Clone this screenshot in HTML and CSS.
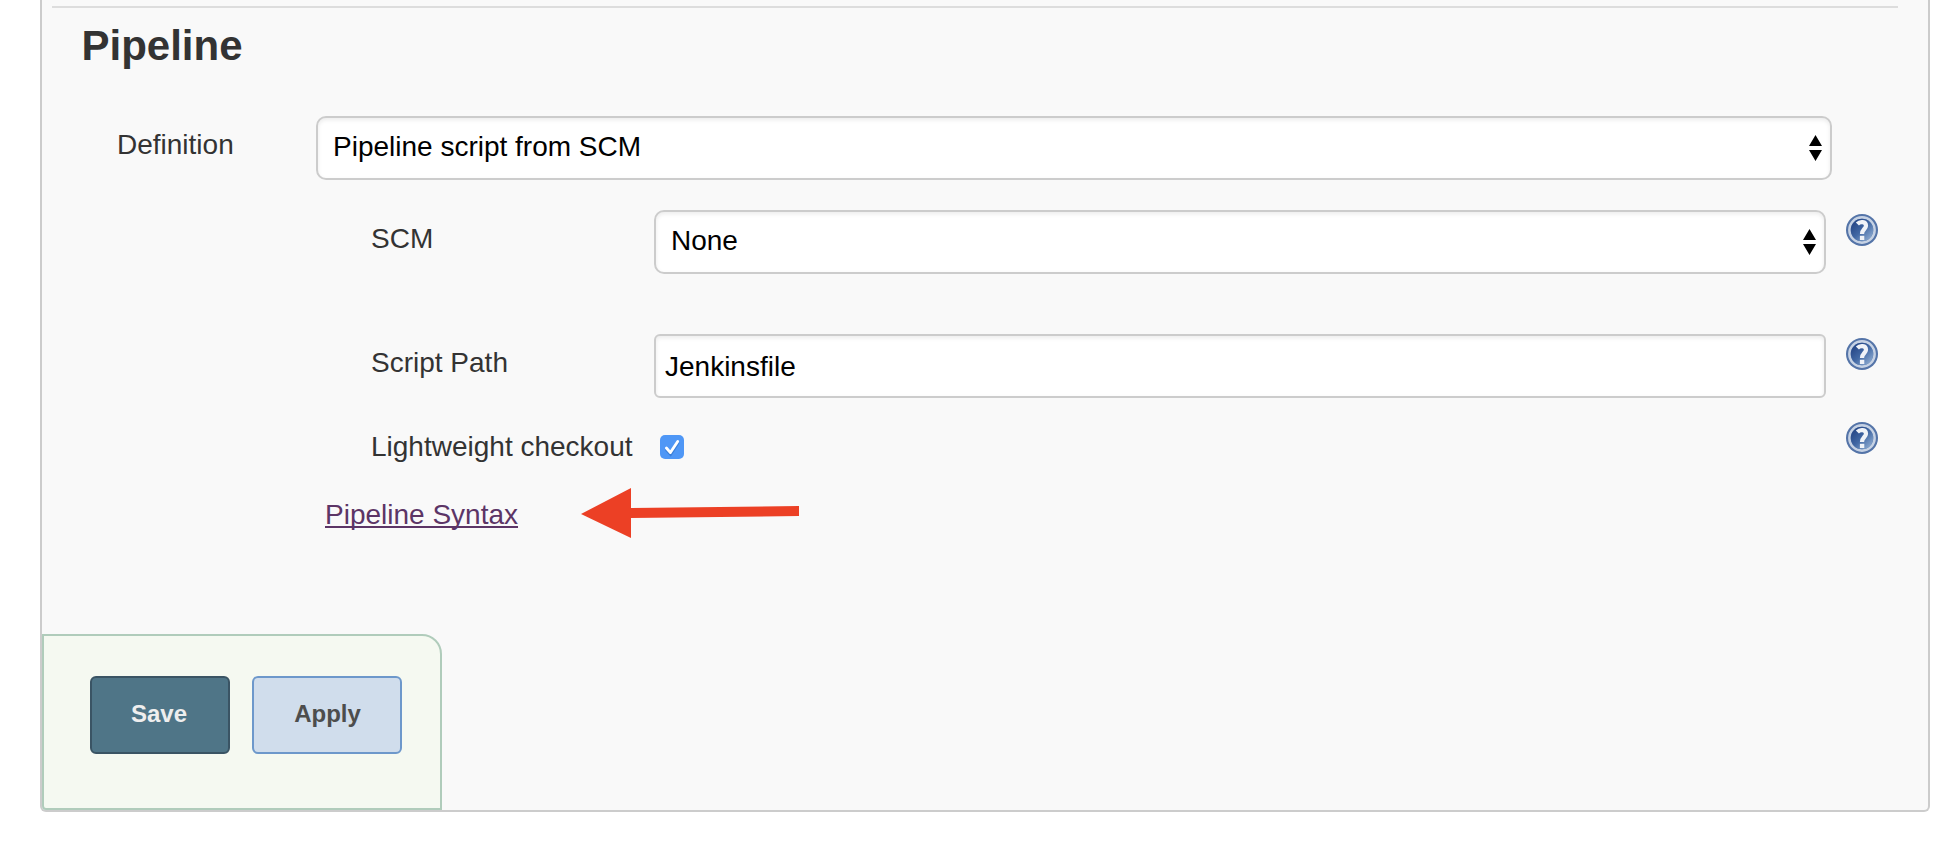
FILE: index.html
```html
<!DOCTYPE html>
<html lang="en">
<head>
<meta charset="utf-8">
<title>Pipeline configuration</title>
<link rel="stylesheet" href="styles.css">
</head>
<body>
<svg class="defs" aria-hidden="true">
  <defs>
    <linearGradient id="disc" x1="0" y1="0" x2="1" y2="1">
      <stop offset="0.2" stop-color="#2b4d8c"/>
      <stop offset="0.5" stop-color="#4168a4"/>
      <stop offset="0.9" stop-color="#8caad0"/>
    </linearGradient>
    <symbol id="help" viewBox="0 0 32 32">
      <circle cx="16" cy="16" r="16" fill="#5474a8"/>
      <circle cx="16" cy="16" r="12.6" fill="none" stroke="#c6d2e4" stroke-width="2.6"/>
      <circle cx="16" cy="16" r="11.2" fill="url(#disc)"/>
      <path d="M11.4 10C14 7.2 20 7.4 20 11.7C20 14.8 16 15.4 16 20" fill="none" stroke="#f0f3f8" stroke-width="4.2"/>
      <rect x="13.9" y="21.8" width="4.4" height="4.2" fill="#f0f3f8"/>
    </symbol>
  </defs>
</svg>
<main class="panel">
  <hr class="rule">
  <h1 class="title">Pipeline</h1>
  <section class="form">
    <div class="row row-definition">
      <span class="label">Definition</span>
      <div class="select">Pipeline script from SCM<svg class="updown" viewBox="0 0 13 26"><path d="M0 11L6.5 0L13 11ZM0 15H13L6.5 26Z"/></svg></div>
    </div>
    <div class="row row-scm">
      <span class="label">SCM</span>
      <div class="select">None<svg class="updown" viewBox="0 0 13 26"><path d="M0 11L6.5 0L13 11ZM0 15H13L6.5 26Z"/></svg></div>
      <svg class="help"><use href="#help"/></svg>
    </div>
    <div class="row row-path">
      <span class="label">Script Path</span>
      <input class="textbox" type="text" value="Jenkinsfile">
      <svg class="help"><use href="#help"/></svg>
    </div>
    <div class="row row-light">
      <span class="label">Lightweight checkout</span>
      <svg class="check" viewBox="0 0 24 24"><rect width="24" height="24" rx="5" fill="#4f97f6"/><path d="M6.4 13.8L10.6 18.5L18 7" transform="translate(0 1)" fill="none" stroke="#3b7fd8" stroke-width="2.8" stroke-linecap="round"/><path d="M6.4 13L10.4 17.6L17.7 6.5" fill="none" stroke="#fff" stroke-width="2.8" stroke-linecap="round" stroke-linejoin="round"/></svg>
      <svg class="help"><use href="#help"/></svg>
    </div>
    <div class="row-link">
      <a class="link" href="#">Pipeline Syntax</a>
      <svg class="arrow" viewBox="0 0 218 50"><path d="M0 26L50 0V20L218 18V28L50 30V50Z" fill="#ec4025"/></svg>
    </div>
  </section>
  <footer class="actions">
    <button class="btn save">Save</button>
    <button class="btn apply">Apply</button>
  </footer>
</main>
</body>
</html>
```
FILE: styles.css
```css
* { box-sizing: border-box; }
body {
  margin: 0;
  padding: 0 30px 0 40px;
  height: 850px;
  overflow: hidden;
  background: #fff;
  color: #333;
  font: 28px/32px "Liberation Sans", Arial, sans-serif;
}
.defs { position: absolute; width: 0; height: 0; }
.panel {
  display: flex;
  flex-direction: column;
  height: 812px;
  padding-top: 6px;
  background: #f9f9f9;
  border: 2px solid #ccc;
  border-top: 0;
  border-radius: 0 0 6px 6px;
}
.rule {
  width: 1846px;
  height: 2px;
  margin: 0 0 0 10px;
  border: 0;
  background: #ddd;
}
.title {
  margin: 0;
  padding: 14px 0 0 39.5px;
  height: 108px;
  font-size: 42px;
  line-height: 48px;
  font-weight: bold;
}
.form { display: flex; flex-direction: column; }
.row { display: grid; align-items: start; }
.label { padding: 13px 0 0 1px; white-space: nowrap; }
.row-definition {
  grid-template-columns: 200px 1516px;
  margin-left: 74px;
  height: 94px;
}
.row-scm, .row-path, .row-light {
  grid-template-columns: 284px 1172px 32px;
  margin-left: 328px;
}
.row-light { grid-template-columns: 290px 1166px 32px; }
.row-scm { height: 124px; }
.row-path { height: 84px; }
.row-light { height: 80px; }
.select, .textbox {
  height: 64px;
  background: #fff;
  border: 2px solid #ccc;
  color: #000;
  box-shadow: inset 0 2px 4px rgba(0, 0, 0, .08);
}
.select {
  display: flex;
  justify-content: space-between;
  padding: 13px 8px 0 15px;
  border-radius: 10px;
}
.updown { width: 13px; height: 26px; margin-top: 4px; }
.textbox {
  width: 100%;
  padding: 2px 8px 0 9px;
  border-radius: 6px;
  font: inherit;
}
.help { width: 32px; height: 32px; margin: 4px 0 0 20px; }
.check { width: 24px; height: 24px; margin-top: 17px; }
.row-link {
  display: flex;
  align-items: flex-start;
  margin-left: 283px;
  height: 136px;
}
.link {
  width: 193px;
  padding-top: 1px;
  color: #5c3566;
  white-space: nowrap;
  text-decoration: underline;
  text-decoration-thickness: 2px;
  text-underline-offset: 2px;
  text-decoration-skip-ink: none;
}
.arrow { width: 218px; height: 50px; margin: -10px 0 0 63px; }
.actions {
  display: flex;
  align-items: flex-start;
  gap: 22px;
  width: 400px;
  height: 176px;
  padding: 40px 0 0 46px;
  background: #f5f9f1;
  border: 2px solid #b0ccbb;
  border-radius: 0 20px 0 4px;
}
.btn {
  height: 78px;
  padding: 0 0 2px;
  border: 2px solid;
  border-radius: 6px;
  font: bold 24px/28px "Liberation Sans", Arial, sans-serif;
}
.save { width: 140px; padding-right: 2px; background: #4f7587; border-color: #3a5464; color: #eee; }
.apply { width: 150px; padding-left: 1px; background: #d0ddec; border-color: #6d98cb; color: #4d4d4d; }
```
